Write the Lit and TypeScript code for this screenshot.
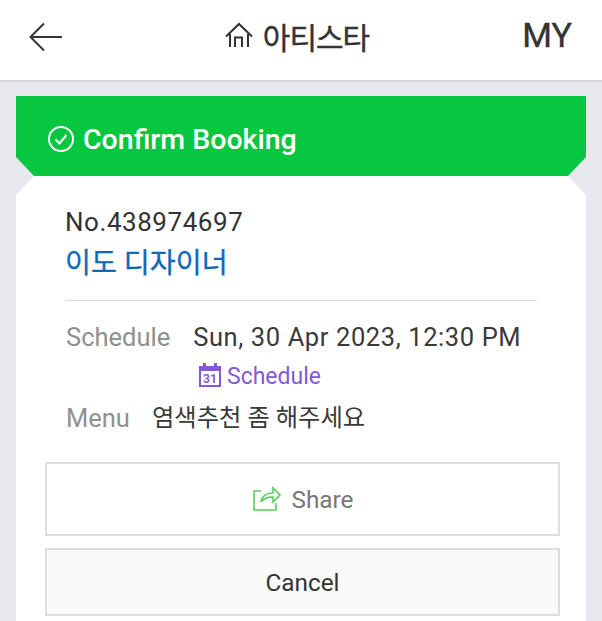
import { LitElement, html, css } from "lit";
import { customElement } from "lit/decorators.js";

@customElement("app-root")
export class AppRoot extends LitElement {
  static styles = css`
    :host {
      display: block;
      width: 602px;
      height: 621px;
      overflow: hidden;
      background: #e8e9ee;
      font-family: Roboto, "Noto Sans CJK KR", sans-serif;
      color: #333;
    }
    .top {
      height: 80px;
      background: #fff;
      border-bottom: 2px solid #d9d9dd;
      display: grid;
      grid-template-columns: 1fr auto 1fr;
      align-items: center;
      padding: 0 30px;
    }
    .back { display: block; margin-top: -6px; margin-left: -1px; }
    .title {
      display: flex;
      align-items: center;
      gap: 9px;
      font-size: 30px;
      font-weight: 400;
      -webkit-text-stroke: 0.4px #333;
      letter-spacing: -1px;
      color: #333;
      margin-top: -9px;
      margin-left: -9px;
    }
    .my {
      justify-self: end;
      font-size: 34px;
      font-weight: 400;
      -webkit-text-stroke: 0.4px #333;
      color: #333;
      margin-top: -10px;
    }
    .wrap {
      padding: 14px 16px 0;
    }
    .band {
      height: 80px;
      box-sizing: border-box;
      background: #06c73f;
      clip-path: polygon(0 0, 100% 0, 100% 61px, 552px 100%, 18px 100%, 0 61px);
      display: flex;
      align-items: center;
      gap: 8px;
      padding: 6px 31px 0 31px;
      color: #fff;
      font-size: 28.500px;
      font-weight: 500;
    }
    .card {
      background: #fff;
      height: 445px;
      clip-path: polygon(18px 0, 552px 0, 100% 19px, 100% 100%, 0 100%, 0 19px);
      padding: 28px 26px 0 29px;
      box-sizing: border-box;
    }
    .info {
      padding: 0 23px 0 20px;
    }
    .no {
      font-size: 26px;
      letter-spacing: 0.55px;
      line-height: 36px;
      color: #333;
    }
    .name {
      font-size: 28.200px;
      font-weight: 400;
      -webkit-text-stroke: 0.3px #0f69b9;
      line-height: 44px;
      color: #0f69b9;
      margin-top: 2px;
      padding-bottom: 14px;
      border-bottom: 1px solid #dcdcdc;
    }
    .row {
      display: flex;
      align-items: center;
      font-size: 25.500px;
      line-height: 36px;
    }
    .when { margin-top: 18px; gap: 23px; padding-left: 1px; }
    .label { color: #909090; }
    .value { color: #3a3a3a; font-size: 25.500px; letter-spacing: 0.6px; }
    .cal {
      display: flex;
      align-items: center;
      gap: 6px;
      color: #8458d8;
      font-size: 23px;
      line-height: 34px;
      margin: 5px 0 0 134px;
    }
    .cal svg { margin-top: -4px; }
    .menu { margin-top: 6px; gap: 22px; padding-left: 1px; }
    .menu .value { font-size: 24.300px; letter-spacing: 0; }
    .btn {
      display: flex;
      align-items: center;
      justify-content: center;
      gap: 10px;
      box-sizing: border-box;
      width: 515px;
      border: 2px solid #dedede;
      background: #fff;
      font-size: 24.300px;
      color: #777;
    }
    .share { height: 74px; margin-top: 26px; }
    .share svg { margin-top: -2px; }
    .cancel {
      height: 68px;
      margin-top: 12px;
      background: #fafafa;
      color: #333;
    }
  `;

  render() {
    return html`
      <div class="top">
        <svg class="back" width="34" height="30" viewBox="0 0 34 30" fill="none" stroke="#333" stroke-width="2">
          <path d="M33 15H2M15 1.500L1.500 15 15 28.500" />
        </svg>
        <div class="title">
          <svg width="30" height="28" viewBox="0 0 30 28" fill="none" stroke="#333" stroke-width="2">
            <path d="M2 14.500L15 2l13 12.500M6 12v13M24 12v13M11 25V15.500h7V25" />
          </svg>
          <span>아티스타</span>
        </div>
        <div class="my">MY</div>
      </div>
      <div class="wrap">
        <div class="band">
          <svg width="28" height="28" viewBox="0 0 28 28" fill="none" stroke="#fff" stroke-width="2">
            <circle cx="14" cy="14" r="12" />
            <path d="M8.500 14.500l4 4 7-8.500" />
          </svg>
          <span>Confirm Booking</span>
        </div>
        <div class="card">
          <div class="info">
            <div class="no">No.438974697</div>
            <div class="name">이도 디자이너</div>
            <div class="row when">
              <span class="label">Schedule</span>
              <span class="value">Sun, 30 Apr 2023, 12:30 PM</span>
            </div>
            <div class="cal">
              <svg width="22" height="24" viewBox="0 0 22 24">
                <path fill="#8458d8" d="M4 0h3v3h8V0h3v3h4v21H0V3h4zM2 8v14h18V8z" />
                <text x="11" y="19.500" text-anchor="middle" font-size="12" font-weight="700" fill="#8458d8" font-family="Roboto, sans-serif">31</text>
              </svg>
              <span>Schedule</span>
            </div>
            <div class="row menu">
              <span class="label">Menu</span>
              <span class="value">염색추천 좀 해주세요</span>
            </div>
          </div>
          <div class="btn share">
            <svg width="30" height="26" viewBox="0 0 30 26" fill="none" stroke="#5ccb5f" stroke-width="1.600">
              <path d="M9 6H2v19h22v-7" />
              <path d="M9 17c1-6 6-9 12-9V3l7 7-7 7v-5c-5 0-9 1-12 5z" />
            </svg>
            <span>Share</span>
          </div>
          <div class="btn cancel">Cancel</div>
        </div>
      </div>
    `;
  }
}
